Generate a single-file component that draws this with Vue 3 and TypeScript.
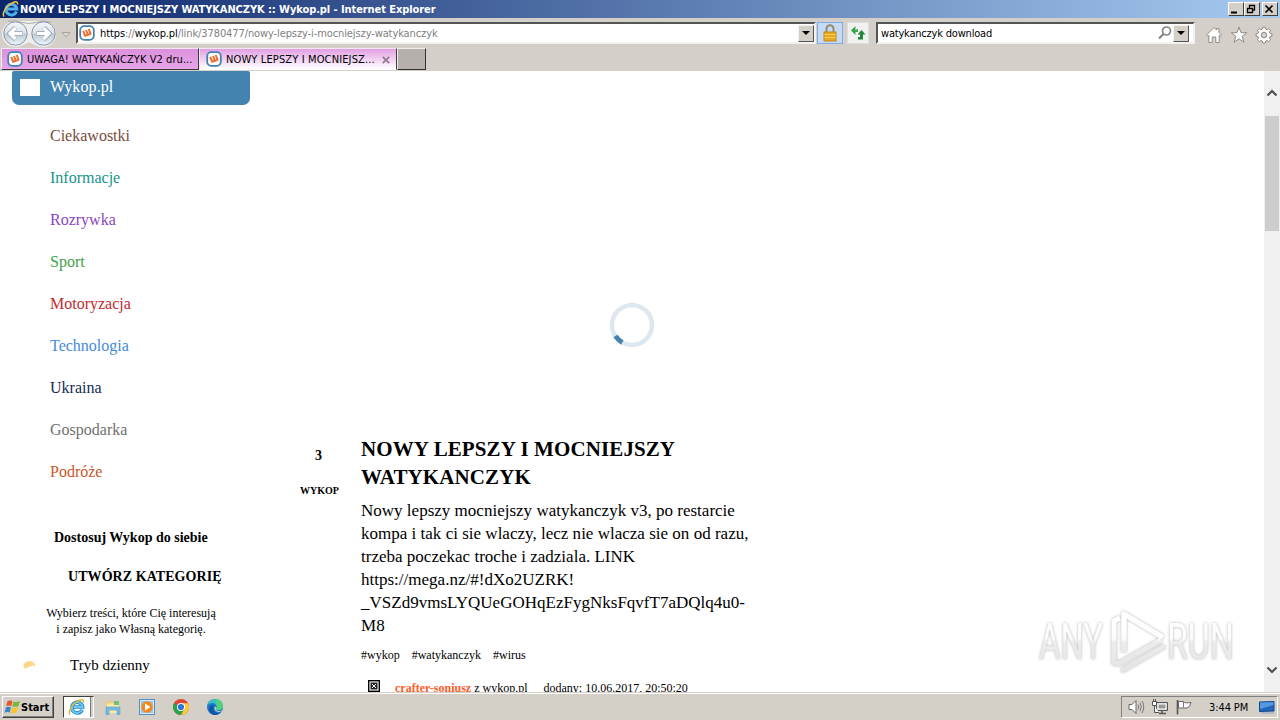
<script setup lang="ts">
interface Category {
  name: string
  tone: string
}

interface Tab {
  title: string
  active: boolean
}

const tabs: Tab[] = [
  { title: 'UWAGA! WATYKAŃCZYK V2 dru...', active: false },
  { title: 'NOWY LEPSZY I MOCNIEJSZ...', active: true }
]

const categories: Category[] = [
  { name: 'Ciekawostki', tone: 'brown' },
  { name: 'Informacje', tone: 'teal' },
  { name: 'Rozrywka', tone: 'purple' },
  { name: 'Sport', tone: 'green' },
  { name: 'Motoryzacja', tone: 'red' },
  { name: 'Technologia', tone: 'blue' },
  { name: 'Ukraina', tone: 'navy' },
  { name: 'Gospodarka', tone: 'gray' },
  { name: 'Podróże', tone: 'orange' }
]

const description: string[] = [
  'Nowy lepszy mocniejszy watykanczyk v3, po restarcie',
  'kompa i tak ci sie wlaczy, lecz nie wlacza sie on od razu,',
  'trzeba poczekac troche i zadziala. LINK',
  'https://mega.nz/#!dXo2UZRK!',
  '_VSZd9vmsLYQUeGOHqEzFygNksFqvfT7aDQlq4u0-',
  'M8'
]

const tags: string[] = ['#wykop', '#watykanczyk', '#wirus']
</script>

<template>
  <div class="window">
    <!-- title bar -->
    <header class="titlebar">
      <svg class="title-icon" width="18" height="18" viewBox="0 0 18 18">
        <path d="M14.500 11.500A5.400 5.400 0 1 1 14.800 9H5.500" fill="none" stroke="#4fb0ee" stroke-width="3" />
        <path d="M2 16.500C-.5 13 5 5 11 2.500c3-1.300 5-.8 4.500 2" fill="none" stroke="#f3c52e" stroke-width="1.500" />
      </svg>
      <span class="title-text">NOWY LEPSZY I MOCNIEJSZY WATYKANCZYK :: Wykop.pl - Internet Explorer</span>
      <div class="window-buttons">
        <span class="win-btn"><svg width="14" height="12"><path d="M3 9.500h6" stroke="#000" stroke-width="2" /></svg></span>
        <span class="win-btn"><svg width="14" height="12"><path d="M5.500 6V2.500h5v4.500H8.500M5 2.500h6M3.500 5.500h5v4h-5zM3 5.500h6" fill="none" stroke="#000" stroke-width="1.300" /></svg></span>
        <span class="win-btn close"><svg width="14" height="12"><path d="M3.500 2.500l7 7M10.500 2.500l-7 7" stroke="#000" stroke-width="1.700" /></svg></span>
      </div>
    </header>

    <!-- address bar -->
    <div class="navbar">
      <svg class="nav-arrows" width="76" height="28" viewBox="0 0 76 28">
        <defs>
          <linearGradient id="glass" x1="0" y1="0" x2="0" y2="1">
            <stop offset="0" stop-color="#f4f6f8" />
            <stop offset=".48" stop-color="#dde3ea" />
            <stop offset=".52" stop-color="#bcc8d3" />
            <stop offset="1" stop-color="#eef6fa" />
          </linearGradient>
        </defs>
        <path d="M15 2h28a13 13 0 0 1 0 26q-6 0-14-5-8 5-14 5a13 13 0 0 1 0-26z" fill="#eeeeee" />
        <path d="M8 2.500q7-2 14 1 7 2 14 0 7-3 15 0" fill="none" stroke="#b0aeac" />
        <circle cx="15.500" cy="14.500" r="11.700" fill="url(#glass)" stroke="#8397a8" />
        <circle cx="43.500" cy="14.500" r="11.700" fill="url(#glass)" stroke="#8397a8" />
        <g fill="none" stroke="#a3b0bc" stroke-width="4.800">
          <path d="M22.500 14.500H10M15.500 8.500l-6 6 6 6" />
          <path d="M36.500 14.500H49M43.500 8.500l6 6-6 6" />
        </g>
        <g fill="none" stroke="#fff" stroke-width="3.200">
          <path d="M22 14.500H10M15.500 9L10 14.500l5.500 5.500" />
          <path d="M37 14.500H49M43.500 9l5.500 5.500-5.500 5.500" />
        </g>
        <path d="M62 13.500h8l-4 4.500z" fill="#d9d5cf" stroke="#aaa6a0" />
      </svg>
      <div class="field address">
        <svg class="favicon" width="16" height="16" viewBox="0 0 16 16">
          <rect x="1.200" y="1.200" width="13.600" height="13.600" rx="4" fill="#fff" stroke="#4383af" stroke-width="1.800" />
          <path d="M4.200 5.800l1.900 5 5.500-2L9.700 4M7 5l1.800 4.600" fill="none" stroke="#ee6f2d" stroke-width="2" stroke-linejoin="round" />
        </svg>
        <span class="url"><b>https</b>://<b>wykop.pl</b>/link/3780477/nowy-lepszy-i-mocniejszy-watykanczyk</span>
        <span class="drop"><svg width="8" height="4"><path d="M0 0h8L4 4z" /></svg></span>
      </div>
      <span class="tool lock">
        <svg width="16" height="18" viewBox="0 0 16 18">
          <path d="M4.500 9V4.800a3.500 3.500 0 0 1 7 0V9" fill="none" stroke="#968a68" stroke-width="2" />
          <rect x="2" y="8" width="12" height="9" fill="#e8a820" stroke="#c48618" />
          <path d="M2.500 10.500h11M2.500 13.500h11" stroke="#fad35f" />
        </svg>
      </span>
      <span class="tool refresh">
        <svg width="16" height="16" viewBox="0 0 16 16">
          <path d="M1 5.500L5.500 1v3H8v3H5.500v3z" fill="#35a247" />
          <path d="M15.500 9.500L11.500 5 7.500 9.500h2.500V12H8v2.500h5v-5z" fill="#258538" />
          <path d="M5.500 2v3H8" fill="none" stroke="#a6dfab" stroke-width=".7" />
        </svg>
      </span>
      <div class="field search">
        <span class="query">watykanczyk download</span>
        <svg width="14" height="14" viewBox="0 0 14 14">
          <circle cx="8.500" cy="5" r="4" fill="#fff" stroke="#858585" stroke-width="1.700" />
          <path d="M5.500 8L1 12.500" stroke="#858585" stroke-width="2.200" />
        </svg>
        <span class="drop"><svg width="8" height="4"><path d="M0 0h8L4 4z" /></svg></span>
      </div>
      <div class="nav-icons">
        <svg width="18" height="18" viewBox="0 0 18 18">
          <path d="M1.500 9L9 1.500l2.500 2.500V2.500h2.500V6.500L16.500 9l-1.300 1.300-1-1V16.500H10.800V11H7.200v5.500H3.800V9.300l-1 1z" fill="#fff" stroke="#8e8b87" />
        </svg>
        <svg width="18" height="18" viewBox="0 0 18 18">
          <path d="M9 1.200l2 5.500h5.800l-4.600 3.600 1.700 5.900L9 12.800l-4.900 3.400 1.700-5.900L1.200 6.700H7z" fill="#fff" stroke="#8e8b87" />
        </svg>
        <svg width="18" height="18" viewBox="0 0 18 18">
          <path d="M7.700 1.200h2.600l.4 2 1.300.5 1.700-1.200 1.900 1.900-1.200 1.700.5 1.300 2 .4v2.600l-2 .4-.5 1.300 1.200 1.700-1.900 1.900-1.700-1.200-1.300.5-.4 2H7.700l-.4-2-1.300-.5-1.700 1.200-1.900-1.900 1.200-1.700-.5-1.300-2-.4V7.800l2-.4.5-1.300-1.200-1.700 1.900-1.900L6 3.700l1.300-.5z" fill="#fff" stroke="#8e8b87" />
          <circle cx="9" cy="9" r="2.800" fill="#d4d0c8" stroke="#8e8b87" />
        </svg>
      </div>
    </div>

    <!-- tabs -->
    <div class="tabs">
      <div v-for="tab in tabs" :key="tab.title" class="tab" :class="{ active: tab.active }">
        <svg class="favicon" width="16" height="16" viewBox="0 0 16 16">
          <rect x="1.200" y="1.200" width="13.600" height="13.600" rx="4" fill="#fff" stroke="#4383af" stroke-width="1.800" />
          <path d="M4.200 5.800l1.900 5 5.500-2L9.700 4M7 5l1.800 4.600" fill="none" stroke="#ee6f2d" stroke-width="2" stroke-linejoin="round" />
        </svg>
        <span class="tab-title">{{ tab.title }}</span>
        <svg v-if="tab.active" class="tab-close" width="8" height="8"><path d="M.8.8l6.400 6.400M7.200.8L.8 7.200" stroke="#8f7d93" stroke-width="1.800" /></svg>
      </div>
      <div class="new-tab"></div>
    </div>

    <!-- page -->
    <div class="viewport">
      <aside class="sidebar">
        <div class="brand">
          <span class="brand-box"></span>
          <span>Wykop.pl</span>
        </div>
        <nav class="categories">
          <a v-for="cat in categories" :key="cat.name" :class="cat.tone">{{ cat.name }}</a>
        </nav>
        <p class="customize">Dostosuj Wykop do siebie</p>
        <p class="create">UTWÓRZ KATEGORIĘ</p>
        <p class="hint">Wybierz treści, które Cię interesują<br>i zapisz jako Własną kategorię.</p>
        <div class="day-mode">
          <svg width="14" height="10" viewBox="0 0 14 10">
            <path d="M.5 8Q0 1.500 6 1q5-.2 6.500 4.800-2 .5-3-.6Q8 7 6 6.500 4.500 9 .5 8z" fill="#fcd68a" />
          </svg>
          <span>Tryb dzienny</span>
        </div>
      </aside>

      <main class="content">
        <div class="media">
          <svg width="46" height="46" viewBox="0 0 46 46">
            <circle cx="23" cy="23" r="20" fill="none" stroke="#dde7ef" stroke-width="4.500" />
            <path d="M6.500 34A20 20 0 0 0 13.300 40.500" fill="none" stroke="#4383af" stroke-width="5" />
          </svg>
        </div>
        <article class="entry">
          <div class="votes">
            <strong class="count">3</strong>
            <strong class="dig">WYKOP</strong>
          </div>
          <div class="body">
            <h2>NOWY LEPSZY I MOCNIEJSZY<br>WATYKANCZYK</h2>
            <p class="description">
              <span v-for="line in description" :key="line">{{ line }}</span>
            </p>
            <div class="tags">
              <a v-for="tag in tags" :key="tag">{{ tag }}</a>
            </div>
            <div class="meta">
              <svg width="12" height="12" viewBox="0 0 12 12">
                <rect x=".7" y=".7" width="10.600" height="10.600" fill="#fff" stroke="#000" stroke-width="1.400" />
                <rect x="2.500" y="2.500" width="7" height="7" fill="#222" />
                <path d="M4 4l4 4M8 4L4 8" stroke="#fff" />
              </svg>
              <span class="author"><b>crafter-soniusz</b> z wykop.pl</span>
              <span>dodany: 10.06.2017, 20:50:20</span>
            </div>
          </div>
        </article>
      </main>

      <div class="scrollbar">
        <svg class="scroll-up" width="12" height="8"><path d="M1.500 6.500L6 2l4.500 4.500" fill="none" stroke="#505050" stroke-width="2.200" /></svg>
        <div class="thumb"></div>
        <svg class="scroll-down" width="12" height="8"><path d="M1.500 1.500L6 6l4.500-4.500" fill="none" stroke="#505050" stroke-width="2.200" /></svg>
      </div>

      <svg class="watermark" width="206" height="76" viewBox="0 0 206 76">
        <defs>
          <linearGradient id="fade" gradientUnits="userSpaceOnUse" x1="0" y1="8" x2="0" y2="70">
            <stop offset="0" stop-color="#ffffff" />
            <stop offset=".46" stop-color="#fcfcfc" />
            <stop offset=".52" stop-color="#ececec" />
            <stop offset="1" stop-color="#e4e4e4" />
          </linearGradient>
        </defs>
        <g class="mark">
          <text x="6" y="57" textLength="64" lengthAdjust="spacingAndGlyphs">ANY</text>
          <text x="134" y="57" textLength="67" lengthAdjust="spacingAndGlyphs">RUN</text>
        </g>
        <g class="mark" fill="none" stroke="url(#fade)" stroke-linejoin="round">
          <path d="M91 50V12L130 35.500" stroke-width="5.500" />
          <path d="M87 16L81 19V61L86 61.500 128 38" stroke-width="5" />
          <path d="M90 68L130 45" stroke-width="4.500" stroke-linecap="round" />
        </g>
        <path d="M95.500 21v29l24-14z" fill="#fff" />
      </svg>
    </div>

    <!-- taskbar -->
    <footer class="taskbar">
      <div class="start">
        <svg width="17" height="16" viewBox="0 0 17 16">
          <path d="M3.500 2.200Q6 .8 8.500 2.200L7.300 7.200Q5 6 2.200 7.300z" fill="#e8532a" />
          <path d="M9.500 2.600q2.500 1.200 6.500-.6l-1.500 5q-3 1.500-6.200.4z" fill="#78b83a" />
          <path d="M2 8.300q2.500-1.200 5-.1l-1.300 5.300q-2.500-1.300-5.200.2z" fill="#3885d0" />
          <path d="M8 8.500q3 1.100 6.200-.4l-1.400 5.200q-3 1.500-6.100.4z" fill="#f8c62c" />
        </svg>
        <span>Start</span>
      </div>
      <div class="task-active">
        <div class="task-face">
          <svg width="18" height="18" viewBox="0 0 18 18">
            <path d="M14.200 11.700A5.400 5.400 0 1 1 14.600 9H5.500" fill="none" stroke="#268bce" stroke-width="3.600" />
            <path d="M14.200 11.700A5.400 5.400 0 1 1 14.600 9H5.500" fill="none" stroke="#6ccaf2" stroke-width="1.800" />
            <path d="M2 16.500C-.5 13 5 5 11 2.500c3-1.300 5-.8 4.500 2" fill="none" stroke="#e5b62b" stroke-width="1.500" />
          </svg>
        </div>
      </div>
      <div class="launchers">
        <svg width="18" height="18" viewBox="0 0 18 18">
          <path d="M2 3h5l1 1.500h6V15H2z" fill="#e8cf78" />
          <path d="M3 5.500h12V15H3z" fill="#f8eaa8" />
          <path d="M10 3h5v4h-5z" fill="#7cbc75" />
          <path d="M2 9h14v7.500h-3V12H5v4.500H2z" fill="#75bce0" stroke="#5a9cc4" stroke-width=".6" />
        </svg>
        <svg width="18" height="18" viewBox="0 0 18 18">
          <rect x="1.500" y="1.500" width="15" height="15" fill="#d8eaf8" stroke="#528fc6" />
          <rect x="3" y="3" width="12" height="12" fill="#9cc5e6" />
          <circle cx="9" cy="9" r="5.700" fill="#f28819" />
          <path d="M7 5.500L12.500 9 7 12.500z" fill="#fff" />
        </svg>
        <svg width="18" height="18" viewBox="0 0 18 18">
          <circle cx="9" cy="9" r="8" fill="#e04437" />
          <path d="M9 9L2.100 5A8 8 0 0 0 9 17l4-6z" fill="#29a350" />
          <path d="M9 5.200h7A8 8 0 0 1 9 17l3.400-6z" fill="#fccc30" />
          <circle cx="9" cy="9" r="4" fill="#fff" />
          <circle cx="9" cy="9" r="3.100" fill="#2d73dc" />
        </svg>
        <svg width="18" height="18" viewBox="0 0 18 18">
          <circle cx="9" cy="9" r="8" fill="#1878c9" />
          <path d="M1.500 7Q3.500 1 9.500 1 16 1.500 17 8q0 4-4.500 4-2.500 0-3-1.500 2-2 .3-4Q6 3.500 1.500 7z" fill="#35c4c3" />
          <path d="M10 1Q16.500 1.500 17 8q0 4-4.500 4-2.500 0-3-1.500 2.500-2 1-4.500z" fill="#57cf7a" />
          <path d="M8 7.500q-3 6 3 7.500 2 .5 4-.8-3 3.500-7.500 2.500Q1 14 3.500 9 5 6.500 8 7.500z" fill="#0d55a5" />
          <path d="M9 8.500q2 1 .5 2.500.5 2 3.500 2 2.500 0 3.500-1-1.500 2-4 2-4-.5-4-4z" fill="#d4d0c8" />
        </svg>
      </div>
      <div class="tray">
        <svg width="18" height="16" viewBox="0 0 18 16">
          <path d="M2 5.500h3L9 1.500v13l-4-4H2z" fill="#fff" stroke="#666" />
          <path d="M11 5.500q1.500 2.500 0 5M13 3.800q2.500 4.200 0 8.400M15 2q3.500 6 0 12" fill="none" stroke="#777" />
        </svg>
        <svg width="18" height="16" viewBox="0 0 18 16">
          <path d="M5.500 3.500h11v8h-11z" fill="#c5c5c5" stroke="#555" />
          <path d="M7 5h8v5H7z" fill="#999" stroke="#fff" />
          <path d="M8 14.500h7M11 11.500v3" stroke="#555" stroke-width="1.500" />
          <path d="M1.500 2.500h4v4h-4zM2.500 0v3M4.500 0v3M3.500 7v6.500H8" fill="#fff" stroke="#555" />
        </svg>
        <svg width="18" height="16" viewBox="0 0 18 16">
          <path d="M2.500 1v14.500" stroke="#555" stroke-width="1.600" />
          <path d="M3.500 2.500h5q1 2 7.500 1-1 5-4 5.500H3.500z" fill="#fff" stroke="#666" />
          <path d="M8.500 3v5.500" stroke="#777" />
        </svg>
        <span class="clock">3:44 PM</span>
        <svg width="16" height="14" viewBox="0 0 16 14">
          <path d="M.5 2L15 1.500V11L.5 11.500z" fill="#2265bd" stroke="#164583" />
          <path d="M1 2.500l13.500-.5v3L1 9z" fill="#5796e1" />
          <path d="M2 13h13" stroke="#a4b2c4" stroke-width="1.500" />
        </svg>
      </div>
    </footer>
  </div>
</template>

<style>
body {
  margin: 0;
  overflow: hidden;
}
</style>

<style scoped>
.window {
  width: 1280px;
  height: 720px;
  display: flex;
  flex-direction: column;
  background: #d4d0c8;
  font-family: 'DejaVu Sans Condensed', 'DejaVu Sans', sans-serif;
  font-size: 11px;
  color: #000;
  overflow: hidden;
}

svg {
  display: block;
  flex: none;
}

p,
h2 {
  margin: 0;
}

/* title bar */
.titlebar {
  height: 18px;
  flex: none;
  display: flex;
  align-items: center;
  padding: 0 2px;
  background: linear-gradient(90deg, #0a246a, #a6caf0);
}

.title-text {
  color: #fff;
  font-weight: bold;
  white-space: nowrap;
  letter-spacing: -0.08px;
}

.window-buttons {
  display: flex;
  margin-left: auto;
}

.win-btn {
  width: 14px;
  height: 12px;
  border: 1px solid;
  border-color: #fff #404040 #404040 #fff;
  background: #d4d0c8;
}

.close {
  margin-left: 2px;
}

.win-btn svg {
  margin-left: -1px;
}

/* address bar */
.navbar {
  height: 30px;
  flex: none;
  display: flex;
  align-items: center;
  background: #d5cfc9;
}

.field {
  box-sizing: border-box;
  height: 22px;
  display: flex;
  align-items: center;
  background: #fff;
  border: 2px solid;
  border-color: #555 #f4f2ee #f4f2ee #555;
  white-space: nowrap;
}

.address {
  width: 740px;
}

.address .favicon {
  margin-left: 1px;
}

.url {
  margin-left: 5px;
  color: #808080;
  letter-spacing: -0.1px;
}

.url b {
  color: #000;
  font-weight: normal;
}

.drop {
  box-sizing: border-box;
  width: 16px;
  height: 17px;
  display: flex;
  align-items: center;
  justify-content: center;
  border: 1px solid;
  border-color: #f4f2ee #555 #555 #f4f2ee;
  background: #d4d0c8;
}

.address .drop {
  margin-left: auto;
}

.tool {
  box-sizing: border-box;
  height: 22px;
  display: flex;
  align-items: center;
  justify-content: center;
}

.lock {
  width: 26px;
  margin-left: 1px;
  background: #c4daf5;
  border: 1px solid #7eaee5;
}

.refresh {
  width: 22px;
  margin-left: 4px;
  background: #f0f2ef;
  border: 1px solid #dce0e0;
}

.search {
  width: 319px;
  margin-left: 7px;
}

.query {
  flex: 1;
  margin-left: 3px;
  letter-spacing: -0.2px;
}

.search .drop {
  margin: 0 4px 0 1px;
}

.nav-icons {
  display: flex;
  gap: 7px;
  margin: 4px 7px 0 auto;
}

/* tabs */
.tabs {
  height: 23px;
  flex: none;
  display: flex;
  align-items: flex-start;
  background: #d5cfc9;
}

.tab {
  box-sizing: border-box;
  width: 198px;
  height: 22px;
  display: flex;
  align-items: center;
  margin-left: 1px;
  padding-left: 5px;
  border: 1px solid;
  border-color: #f4e6f4 #403840 #403840 #f4e6f4;
  background: linear-gradient(#dc92dc, #e6a5e8);
  white-space: nowrap;
}

.tab.active {
  margin-left: 0;
  padding-left: 6px;
  border-bottom-color: #fff;
  background: linear-gradient(#e19fe3, #fff);
}

.tab-title {
  margin-left: 4px;
  letter-spacing: 0.06px;
}

.active .tab-title {
  letter-spacing: 0.13px;
}

.tab-close {
  margin: 1px 6px 0 auto;
}

.new-tab {
  box-sizing: border-box;
  width: 29px;
  height: 22px;
  border: 1px solid;
  border-color: #eee #303030 #303030 #eee;
  background: #b5b0ab;
}

/* page */
.viewport {
  position: relative;
  height: 621px;
  flex: none;
  display: flex;
  background: #fff;
  font-family: 'Liberation Serif', serif;
  overflow: hidden;
}

.sidebar {
  width: 250px;
  flex: none;
}

.brand {
  box-sizing: border-box;
  width: 238px;
  height: 34px;
  display: flex;
  align-items: center;
  gap: 10px;
  margin-left: 12px;
  padding: 0 8px 2px;
  border-radius: 2px 2px 7px 7px;
  background: #4383af;
  color: #fff;
  font-size: 16px;
  letter-spacing: 0.1px;
}

.brand-box {
  width: 20px;
  height: 17px;
  background: #fff;
}

.categories {
  display: flex;
  flex-direction: column;
  padding: 10px 0 0 50px;
  font-size: 16px;
  line-height: 42px;
}

.brown { color: #784b40; }
.teal { color: #15948b; }
.purple { color: #8846bd; }
.green { color: #43a04a; }
.red { color: #c3292d; }
.blue { color: #438bdd; }
.navy { color: #172b50; }
.gray { color: #707070; }
.orange { color: #ca5528; }

.customize {
  margin: 37px 0 0 54px;
  font-size: 14px;
  font-weight: bold;
  line-height: 16px;
}

.create {
  margin: 23px 0 0 68px;
  font-size: 14px;
  font-weight: bold;
  line-height: 16px;
  letter-spacing: 0.06px;
}

.hint {
  width: 238px;
  margin: 20px 0 0 12px;
  font-size: 12px;
  line-height: 16px;
  text-align: center;
}

.day-mode {
  display: flex;
  align-items: center;
  gap: 33px;
  margin: 19px 0 0 23px;
  font-size: 15px;
  line-height: 18px;
}

.content {
  flex: 1;
}

.media {
  height: 364px;
  display: flex;
  padding-left: 359px;
  box-sizing: border-box;
}

.media svg {
  margin-top: 231px;
}

.entry {
  display: flex;
}

.votes {
  width: 111px;
  flex: none;
  display: flex;
  flex-direction: column;
}

.count {
  padding: 13px 0 0 65px;
  font-size: 14px;
  line-height: 16px;
}

.dig {
  padding: 20px 0 0 50px;
  font-size: 10px;
  line-height: 14px;
}

h2 {
  font-size: 21px;
  line-height: 28px;
  letter-spacing: 0.1px;
  white-space: nowrap;
}

.body {
  width: 420px;
}

.description {
  display: flex;
  flex-direction: column;
  margin-top: 8px;
  font-size: 17px;
  line-height: 23px;
  letter-spacing: 0.01px;
  white-space: nowrap;
}

.tags {
  display: flex;
  gap: 12px;
  margin-top: 10px;
  font-size: 12px;
  line-height: 16px;
}

.meta {
  display: flex;
  align-items: center;
  gap: 16px;
  margin: 17px 0 0 7px;
  font-size: 12px;
  line-height: 16px;
  white-space: nowrap;
}

.meta svg {
  margin: -4px -1px 0 0;
}

.author b {
  color: #ff5c29;
}

.scrollbar {
  box-sizing: border-box;
  width: 16px;
  flex: none;
  display: flex;
  flex-direction: column;
  align-items: center;
  padding: 18px 0;
  background: #f0f0f0;
}

.thumb {
  width: 14px;
  height: 115px;
  margin-top: 19px;
  background: #cdcdcd;
}

.scroll-down {
  margin-top: auto;
}

/* sits over the page */
.watermark {
  position: absolute;
  right: 41px;
  bottom: 14px;
}

.mark {
  font-family: Roboto, 'Liberation Sans', sans-serif;
  font-size: 50px;
  filter: drop-shadow(0 0 1.5px #b4b4b4);
}

.mark text {
  fill: url(#fade);
}

/* taskbar */
.taskbar {
  box-sizing: border-box;
  height: 28px;
  flex: none;
  display: flex;
  align-items: center;
  padding: 1px 2px 0;
  border-top: 1px solid #d4d0c8;
  box-shadow: inset 0 1px #fff;
  background: #d4d0c8;
}

.start {
  box-sizing: border-box;
  width: 52px;
  height: 22px;
  display: flex;
  align-items: center;
  padding-left: 1px;
  border: 1px solid;
  border-color: #fff #404040 #404040 #fff;
  box-shadow: inset -1px -1px #808080;
  font-weight: bold;
}

.task-active {
  box-sizing: border-box;
  width: 31px;
  height: 22px;
  display: flex;
  margin-left: 9px;
  border: 1px solid;
  border-color: #404040 #fff #fff #404040;
}

.task-face {
  width: 26px;
  display: flex;
  align-items: center;
  justify-content: center;
  border-right: 1px solid #777;
  background: #fff;
}

.launchers {
  display: flex;
  gap: 16px;
  margin-left: 10px;
}

.tray {
  box-sizing: border-box;
  width: 157px;
  height: 22px;
  display: flex;
  align-items: center;
  gap: 6px;
  margin-left: auto;
  padding-left: 5px;
  border: 1px solid;
  border-color: #808080 #fff #fff #808080;
}

.clock {
  width: 44px;
  margin-left: 10px;
  letter-spacing: -0.1px;
  white-space: nowrap;
}
</style>
